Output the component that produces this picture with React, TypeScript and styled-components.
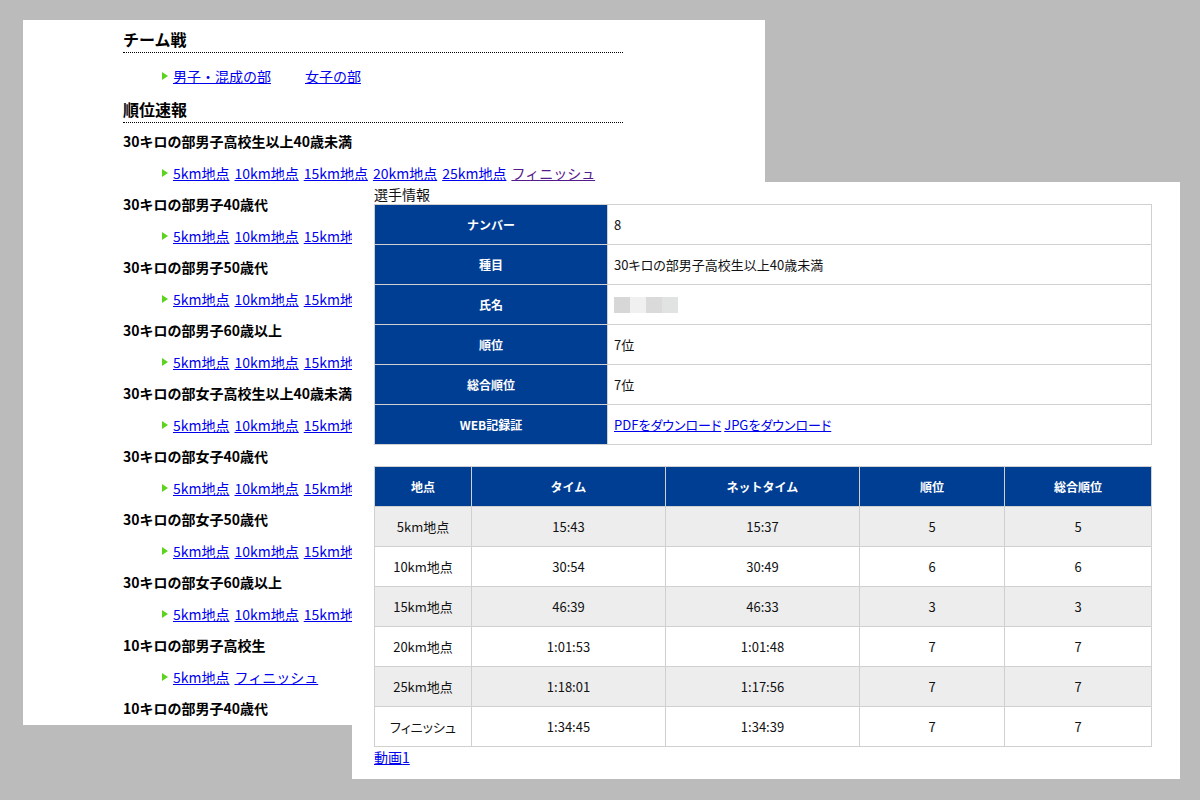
import React from "react";
import styled, { createGlobalStyle } from "styled-components";

const GlobalStyle = createGlobalStyle`
  html, body { margin: 0; padding: 0; }
  body {
    background: #bbbbbb;
    font-family: "Noto Sans CJK JP", "Noto Sans", sans-serif;
    color: #111;
  }
`;

const Canvas = styled.div`
  position: relative;
  width: 1200px;
  height: 800px;
  overflow: hidden;
  background: #bbbbbb;
`;

const Sheet = styled.div<{ $x: number; $y: number; $w: number; $h: number }>`
  position: absolute;
  left: ${(p) => p.$x}px;
  top: ${(p) => p.$y}px;
  width: ${(p) => p.$w}px;
  height: ${(p) => p.$h}px;
  background: #ffffff;
  overflow: hidden;
  box-sizing: border-box;
`;

/* ---------- left sheet ---------- */

const IndexColumn = styled.div`
  width: 500px;
  margin-left: 100px;
  padding-top: 8px;
  display: flex;
  flex-direction: column;
`;

const SectionTitle = styled.h2<{ $gap: number }>`
  margin: ${(p) => p.$gap}px 0 0;
  font-size: 16px;
  font-weight: bold;
  line-height: 22px;
  padding-bottom: 2px;
  border-bottom: 1px dotted #000;
  color: #000;
`;

const CategoryTitle = styled.h3<{ $gap: number }>`
  margin: ${(p) => p.$gap}px 0 0;
  font-size: 14px;
  font-weight: bold;
  line-height: 20px;
  color: #000;
  white-space: nowrap;
`;

const LinkRow = styled.div<{ $gap: number }>`
  margin-top: ${(p) => p.$gap}px;
  display: flex;
  align-items: center;
  gap: 5px;
  padding-left: 39px;
  font-size: 14px;
  line-height: 20px;
  white-space: nowrap;
`;

const Bullet = styled.span`
  display: inline-block;
  width: 0;
  height: 0;
  border-left: 6px solid #5cd41e;
  border-top: 4.5px solid transparent;
  border-bottom: 4.5px solid transparent;
`;

const TextLink = styled.a<{ $visited?: boolean; $spaced?: boolean }>`
  color: ${(p) => (p.$visited ? "#551a8b" : "#0000ee")};
  text-decoration: underline;
  margin-left: ${(p) => (p.$spaced ? "29px" : "0")};
  cursor: pointer;
`;

/* ---------- right sheet ---------- */

const DetailColumn = styled.div`
  padding: 2px 29px 0 22px;
  display: flex;
  flex-direction: column;
`;

const Caption = styled.div`
  font-size: 14px;
  line-height: 20px;
  color: #111;
`;

const DataTable = styled.table<{ $gap: number }>`
  width: 777px;
  margin-top: ${(p) => p.$gap}px;
  border-collapse: collapse;
  table-layout: fixed;
`;

const Row = styled.tr<{ $shade?: boolean }>`
  height: 40px;
  background: ${(p) => (p.$shade ? "#ededed" : "#ffffff")};
`;

const HeadCell = styled.th`
  background: #003e94;
  color: #ffffff;
  font-size: 12px;
  font-weight: bold;
  border: 1px solid #d0d0d0;
  padding: 0;
  text-align: center;
  vertical-align: middle;
`;

const DataCell = styled.td<{ $center?: boolean }>`
  border: 1px solid #d0d0d0;
  padding: 0 6px;
  font-size: 13px;
  font-feature-settings: "palt";
  text-align: ${(p) => (p.$center ? "center" : "left")};
  vertical-align: middle;
  color: #111;
`;

const Mosaic = styled.div`
  display: flex;
  height: 16px;
`;

const MosaicTile = styled.span<{ $tone: string }>`
  width: 16px;
  height: 16px;
  background: ${(p) => p.$tone};
`;

const FootLink = styled.a`
  font-size: 14px;
  line-height: 20px;
  color: #0000ee;
  text-decoration: underline;
  align-self: flex-start;
`;

/* ---------- data ---------- */

const full = ["5km地点", "10km地点", "15km地点", "20km地点", "25km地点", "フィニッシュ"];
const short = ["5km地点", "フィニッシュ"];

const categories: { title: string; links: string[] }[] = [
  { title: "30キロの部男子高校生以上40歳未満", links: full },
  { title: "30キロの部男子40歳代", links: full },
  { title: "30キロの部男子50歳代", links: full },
  { title: "30キロの部男子60歳以上", links: full },
  { title: "30キロの部女子高校生以上40歳未満", links: full },
  { title: "30キロの部女子40歳代", links: full },
  { title: "30キロの部女子50歳代", links: full },
  { title: "30キロの部女子60歳以上", links: full },
  { title: "10キロの部男子高校生", links: short },
  { title: "10キロの部男子40歳代", links: [] },
];

const splits = [
  ["5km地点", "15:43", "15:37", "5", "5"],
  ["10km地点", "30:54", "30:49", "6", "6"],
  ["15km地点", "46:39", "46:33", "3", "3"],
  ["20km地点", "1:01:53", "1:01:48", "7", "7"],
  ["25km地点", "1:18:01", "1:17:56", "7", "7"],
  ["フィニッシュ", "1:34:45", "1:34:39", "7", "7"],
];

const splitCols = [97, 194, 194, 145, 147];

export default function App() {
  return (
    <>
      <GlobalStyle />
      <Canvas>
        <Sheet $x={23} $y={20} $w={742} $h={705}>
          <IndexColumn>
            <SectionTitle $gap={0}>チーム戦</SectionTitle>
            <LinkRow $gap={13}>
              <Bullet />
              <TextLink>男子・混成の部</TextLink>
              <TextLink $spaced>女子の部</TextLink>
            </LinkRow>
            <SectionTitle $gap={12}>順位速報</SectionTitle>
            {categories.map((c, i) => (
              <React.Fragment key={c.title}>
                <CategoryTitle $gap={i === 0 ? 8 : 11}>{c.title}</CategoryTitle>
                {c.links.length > 0 && (
                  <LinkRow $gap={12}>
                    <Bullet />
                    {c.links.map((l) => (
                      <TextLink key={l} $visited={i === 0 && l === "フィニッシュ"}>
                        {l}
                      </TextLink>
                    ))}
                  </LinkRow>
                )}
              </React.Fragment>
            ))}
          </IndexColumn>
        </Sheet>

        <Sheet $x={352} $y={182} $w={828} $h={597}>
          <DetailColumn>
            <Caption>選手情報</Caption>
            <DataTable $gap={0}>
              <colgroup>
                <col style={{ width: 233 }} />
                <col style={{ width: 544 }} />
              </colgroup>
              <tbody>
                <Row>
                  <HeadCell>ナンバー</HeadCell>
                  <DataCell>8</DataCell>
                </Row>
                <Row>
                  <HeadCell>種目</HeadCell>
                  <DataCell>30キロの部男子高校生以上40歳未満</DataCell>
                </Row>
                <Row>
                  <HeadCell>氏名</HeadCell>
                  <DataCell>
                    <Mosaic>
                      <MosaicTile $tone="#d7d7d7" />
                      <MosaicTile $tone="#f0f0f0" />
                      <MosaicTile $tone="#dadada" />
                      <MosaicTile $tone="#e1e3e3" />
                    </Mosaic>
                  </DataCell>
                </Row>
                <Row>
                  <HeadCell>順位</HeadCell>
                  <DataCell>7位</DataCell>
                </Row>
                <Row>
                  <HeadCell>総合順位</HeadCell>
                  <DataCell>7位</DataCell>
                </Row>
                <Row>
                  <HeadCell>WEB記録証</HeadCell>
                  <DataCell>
                    <TextLink>PDFをダウンロード</TextLink> <TextLink>JPGをダウンロード</TextLink>
                  </DataCell>
                </Row>
              </tbody>
            </DataTable>

            <DataTable $gap={21}>
              <colgroup>
                {splitCols.map((w, i) => (
                  <col key={i} style={{ width: w }} />
                ))}
              </colgroup>
              <thead>
                <Row>
                  <HeadCell>地点</HeadCell>
                  <HeadCell>タイム</HeadCell>
                  <HeadCell>ネットタイム</HeadCell>
                  <HeadCell>順位</HeadCell>
                  <HeadCell>総合順位</HeadCell>
                </Row>
              </thead>
              <tbody>
                {splits.map((r, i) => (
                  <Row key={r[0]} $shade={i % 2 === 0}>
                    {r.map((v, j) => (
                      <DataCell key={j} $center>
                        {v}
                      </DataCell>
                    ))}
                  </Row>
                ))}
              </tbody>
            </DataTable>
            <FootLink>動画1</FootLink>
          </DetailColumn>
        </Sheet>
      </Canvas>
    </>
  );
}
